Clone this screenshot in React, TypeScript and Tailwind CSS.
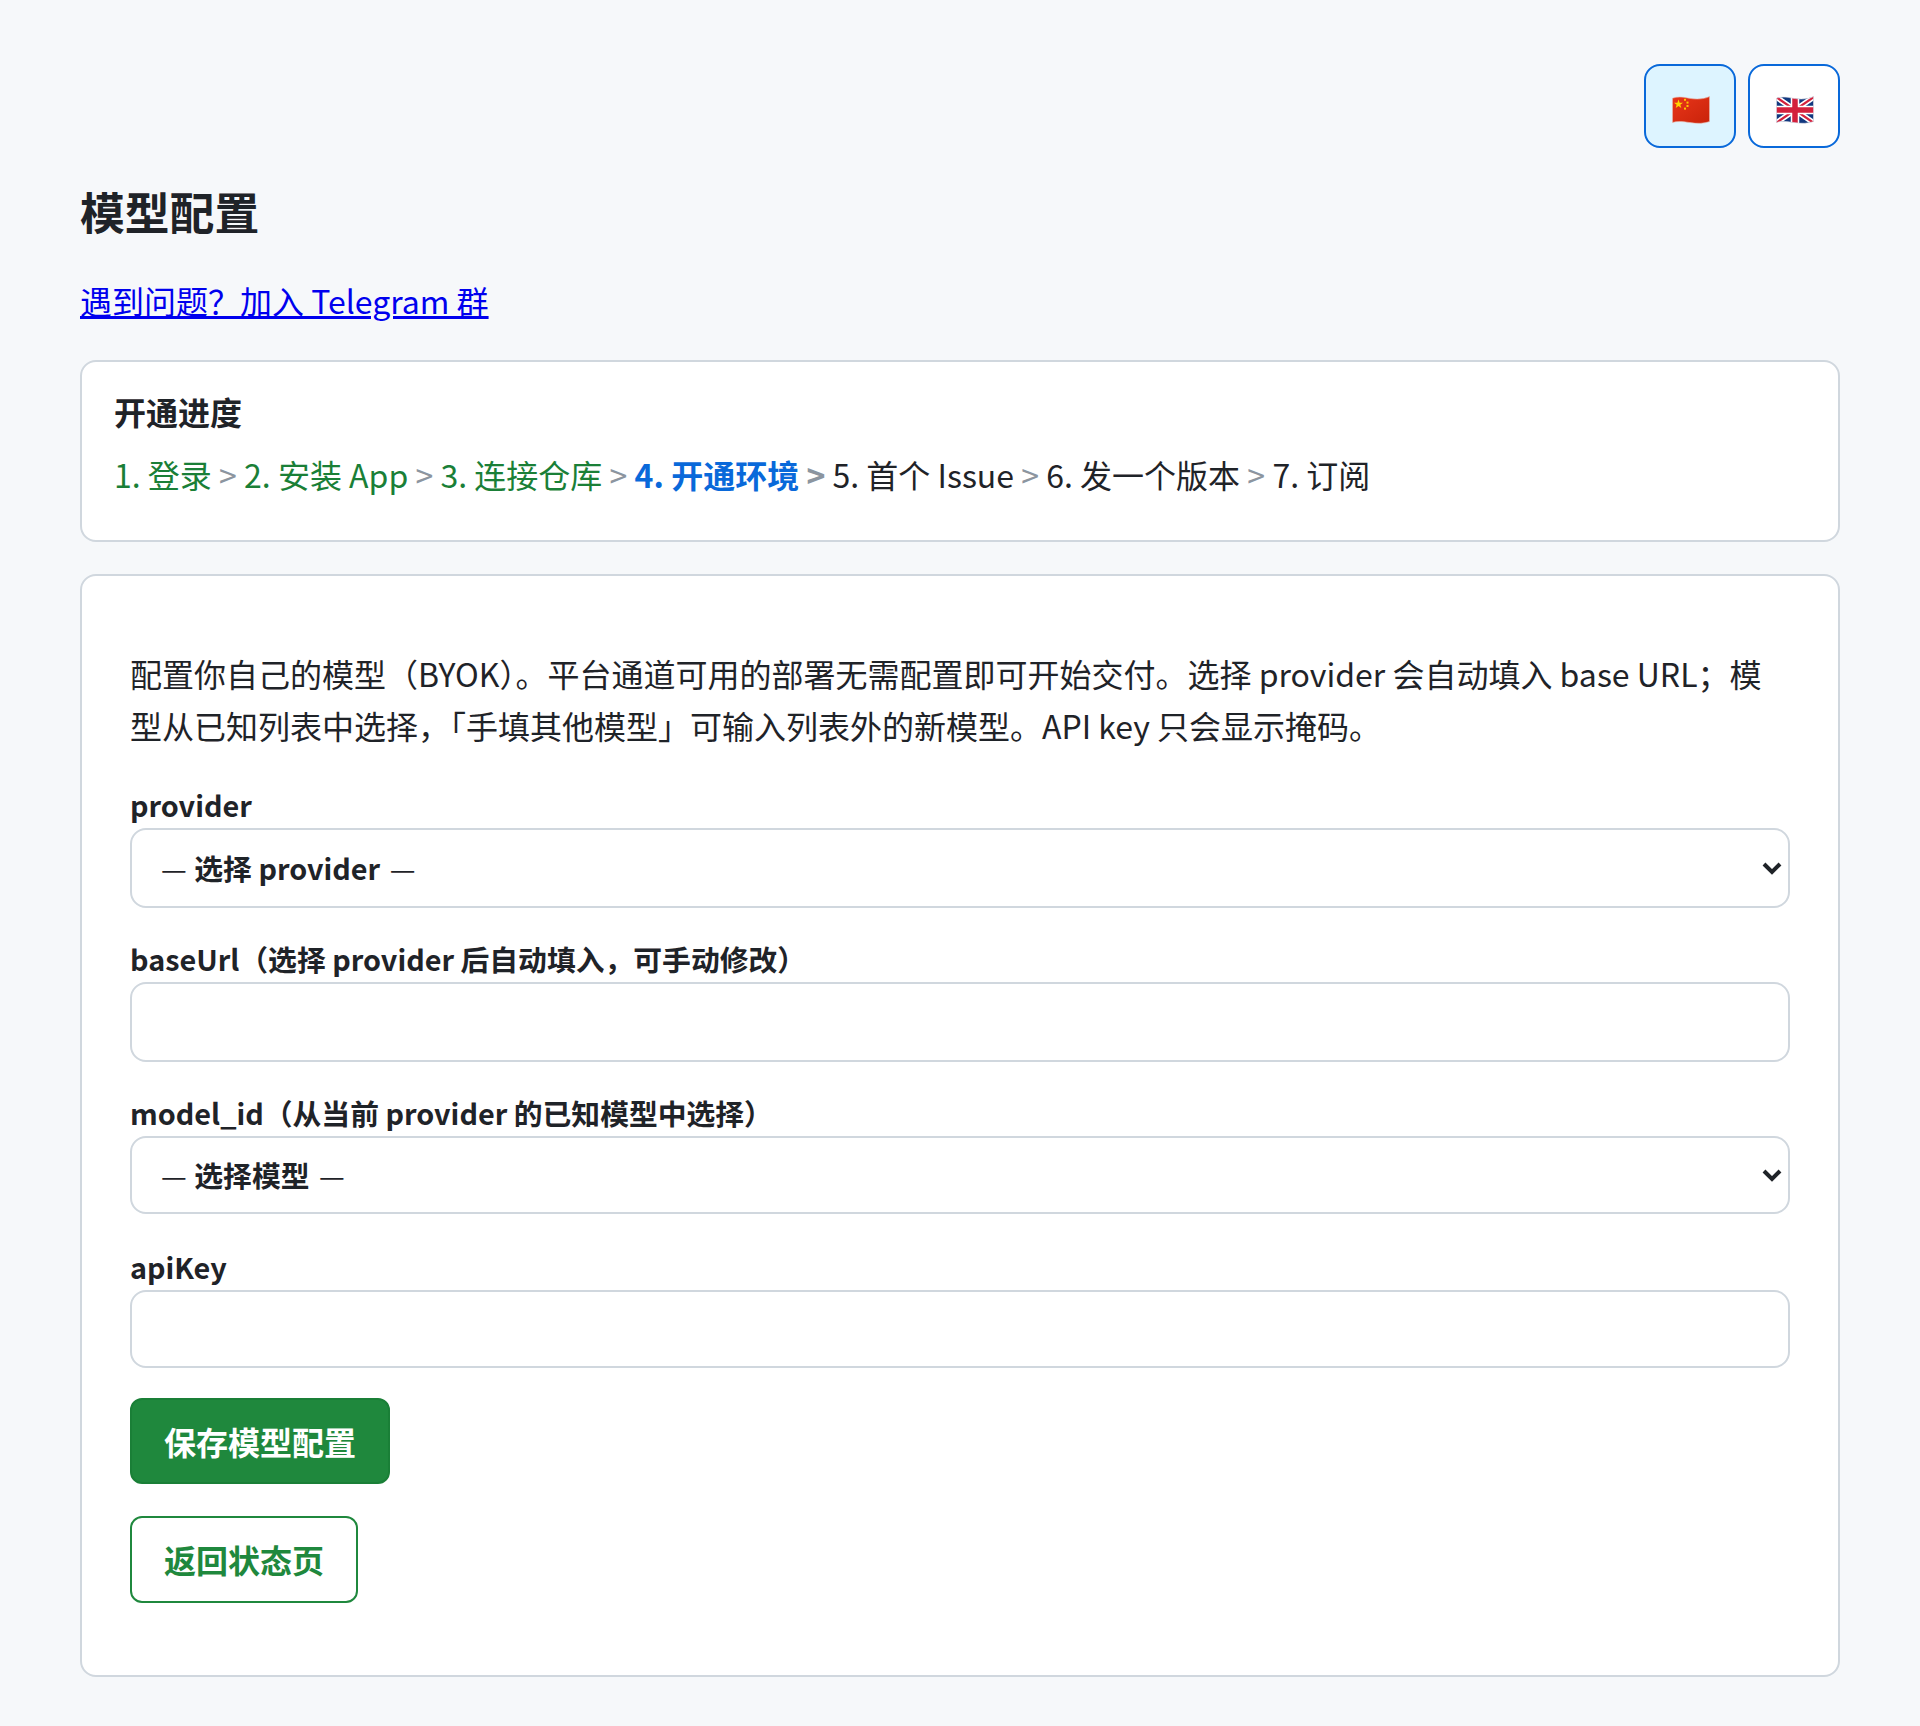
import { ReactNode } from "react"

const wavePath =
  "M0.5 2.2C5 0.6 10 0.8 17 2.2C24 3.6 32 3.2 37.5 0.6V25.6C32 27.6 25 27.8 18 26.6C11 25.4 5 25 0.5 26.4Z"

function FlagCN() {
  return (
    <svg width="38" height="28" viewBox="0 0 38 28" aria-label="中文">
      <defs>
        <linearGradient id="cnRed" x1="0" y1="0" x2="1" y2="1">
          <stop offset="0" stopColor="#e8351a" />
          <stop offset="1" stopColor="#c9230a" />
        </linearGradient>
      </defs>
      <path d={wavePath} fill="url(#cnRed)" stroke="#e7b9ac" strokeWidth="0.6" />
      <polygon
        points="6.5,3.6 7.6,6.8 11,6.8 8.3,8.8 9.3,12 6.5,10.1 3.7,12 4.7,8.8 2,6.8 5.4,6.8"
        fill="#ffd600"
      />
      <rect x="12" y="2.8" width="2" height="2" fill="#ffc400" />
      <rect x="14.5" y="5.6" width="2" height="2" fill="#ffc400" />
      <rect x="14.5" y="9" width="2" height="2" fill="#ffc400" />
      <rect x="12" y="11.6" width="2" height="2" fill="#ffc400" />
    </svg>
  )
}

function FlagUK() {
  return (
    <svg width="38" height="28" viewBox="0 0 38 28" aria-label="English">
      <defs>
        <clipPath id="ukWave">
          <path d={wavePath} />
        </clipPath>
      </defs>
      <g clipPath="url(#ukWave)">
        <rect width="38" height="28" fill="#12387f" />
        <path d="M0 1L38 27M38 1L0 27" stroke="#fff" strokeWidth="5.5" />
        <path d="M0 1L38 27M38 1L0 27" stroke="#d3203c" strokeWidth="2.2" />
        <path d="M19 0V28M0 14H38" stroke="#fff" strokeWidth="8.5" />
        <path d="M19 0V28M0 14H38" stroke="#d3203c" strokeWidth="5.5" />
      </g>
      <path d={wavePath} fill="none" stroke="#e4e4ea" strokeWidth="0.6" />
    </svg>
  )
}

function Chevron() {
  return (
    <svg
      width="20"
      height="14"
      viewBox="0 0 20 14"
      className="absolute right-[8px] top-1/2 -translate-y-1/2 pointer-events-none"
    >
      <polyline points="2,3 10,11 18,3" fill="none" stroke="#1f2328" strokeWidth="4" />
    </svg>
  )
}

function Field({ label, className, children }: { label: string; className: string; children: ReactNode }) {
  return (
    <div className={className}>
      <label className="block text-[28.8px] leading-[46px] font-semibold">{label}</label>
      {children}
    </div>
  )
}

function Select({ text, height }: { text: string; height: string }) {
  return (
    <div className={`relative ${height}`}>
      <button
        role="combobox"
        className="flex h-full w-full items-center rounded-[16px] border-2 border-[#d0d7de] bg-white pl-[29px] text-[28.8px] font-semibold text-[#1f2328]"
      >
        <span className="font-normal">—</span>
        <span className="ml-[1px] mr-[3px] whitespace-pre"> {text} </span>
        <span className="font-normal">—</span>
      </button>
      <Chevron />
    </div>
  )
}

const inputClass = "block h-full w-full rounded-[16px] border-2 border-[#d0d7de] bg-white px-[30px] text-[28.8px] outline-none"

function Sep({ bold }: { bold?: boolean }) {
  return <span className={bold ? "mx-[7.25px] font-bold text-[#8c959f]" : "mx-[7.25px] text-[#8c959f]"}>&gt;</span>
}

export default function App() {
  return (
    <div className="min-h-screen bg-[#f6f8fa] px-[80px] pt-[64px] pb-[49px] text-[#1f2328] font-['Noto_Sans_CJK_SC','Noto_Sans',sans-serif]">
      <div className="flex justify-end gap-[12px]">
        <button className="flex h-[84px] w-[92px] items-center justify-center rounded-[16px] border-2 border-[#0969da] bg-[#ddf4ff] pl-[2px] pt-[8px]">
          <FlagCN />
        </button>
        <button className="flex h-[84px] w-[92px] items-center justify-center rounded-[16px] border-2 border-[#0969da] bg-white pl-[2px] pt-[8px]">
          <FlagUK />
        </button>
      </div>

      <h1 className="mt-[38px] text-[44.8px] leading-[50px] font-bold">模型配置</h1>

      <p className="mt-[40px] text-[32px] leading-[48px]">
        <a href="#" className="text-[#0000ee] underline">
          遇到问题？加入 Telegram 群
        </a>
      </p>

      {/* Progress */}
      <div className="mt-[36px] h-[182px] rounded-[16px] border-2 border-[#d0d7de] bg-white px-[32px] pt-[24px]">
        <div className="text-[32px] leading-[50px] font-bold">开通进度</div>
        <div className="mt-[13px] text-[32px] leading-[50px]">
          <span className="text-[#1a7f37]">1. 登录</span>
          <Sep />
          <span className="text-[#1a7f37]">2. 安装 App</span>
          <Sep />
          <span className="text-[#1a7f37]">3. 连接仓库</span>
          <Sep />
          <span className="font-bold text-[#0969da]">4. 开通环境</span>
          <Sep bold />
          <span>5. 首个 Issue</span>
          <Sep />
          <span>6. 发一个版本</span>
          <Sep />
          <span>7. 订阅</span>
        </div>
      </div>

      {/* Form */}
      <div className="mt-[32px] rounded-[16px] border-2 border-[#d0d7de] bg-white px-[48px] pt-[71px] pb-[72px]">
        <p className="text-[32px] leading-[52px]">
          配置你自己的模型（BYOK）。平台通道可用的部署无需配置即可开始交付。选择 provider 会自动填入 base URL；模型从已知列表中选择，「手填其他模型」可输入列表外的新模型。API key 只会显示掩码。
        </p>

        <div className="mt-[31px]">
          <Field label="provider" className="mb-[28px]">
            <Select text="选择 provider" height="h-[80px]" />
          </Field>
          <Field label="baseUrl（选择 provider 后自动填入，可手动修改）" className="mb-[28px]">
            <div className="h-[80px]">
              <input className={inputClass} />
            </div>
          </Field>
          <Field label="model_id（从当前 provider 的已知模型中选择）" className="mb-[30px]">
            <Select text="选择模型" height="h-[78px]" />
          </Field>
          <Field label="apiKey" className="mb-[30px]">
            <div className="h-[78px]">
              <input className={inputClass} />
            </div>
          </Field>
        </div>

        <div className="flex flex-col items-start gap-[32px]">
          <button className="h-[86px] rounded-[12px] border-2 border-[#1a7f37] bg-[#1f883d] px-[32px] text-[32px] font-bold text-white">
            保存模型配置
          </button>
          <a
            href="#"
            className="flex h-[87px] items-center rounded-[12px] border-2 border-[#1f883d] bg-white px-[32px] pb-[2px] text-[32px] font-bold text-[#1f883d]"
          >
            返回状态页
          </a>
        </div>
      </div>
    </div>
  )
}
